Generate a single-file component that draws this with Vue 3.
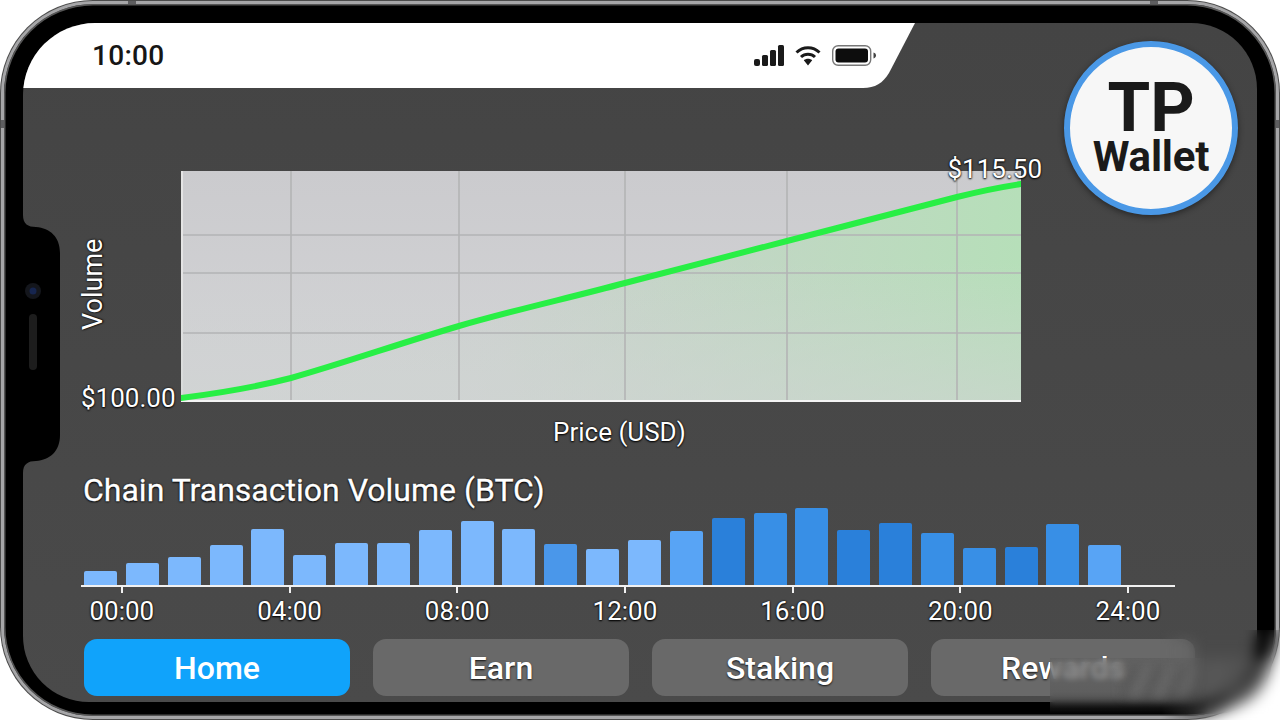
<template>
  <div class="page">
    <div class="phone">
      <div class="screen">
        <div class="status">
          <span class="clock">10:00</span>
          <div class="status-icons">
            <svg width="30" height="21" viewBox="0 0 30 21">
              <rect x="0" y="14" width="6" height="7" rx="2" fill="#1a1a1a" />
              <rect x="8" y="10" width="6" height="11" rx="1.5" fill="#1a1a1a" />
              <rect x="16" y="5" width="6" height="16" rx="1.5" fill="#1a1a1a" />
              <rect x="24" y="0" width="6" height="21" rx="1.5" fill="#1a1a1a" />
            </svg>
            <svg width="26" height="21" viewBox="0 0 26 21">
              <path d="M1.5 7.5C8 1.2 18 1.2 24.5 7.5" fill="none" stroke="#1a1a1a" stroke-width="3" />
              <path d="M6 12C10 8.3 16 8.3 20 12" fill="none" stroke="#1a1a1a" stroke-width="3" />
              <path d="M8.8 15.2 13 20.5l4.2-5.3c-2.4-2-6-2-8.4 0z" fill="#1a1a1a" />
            </svg>
            <svg width="45" height="21" viewBox="0 0 45 21">
              <rect x="0.7" y="0.7" width="38" height="19.6" rx="5.5" fill="none" stroke="#777" stroke-width="1.4" />
              <rect x="3.5" y="3.5" width="32.5" height="14" rx="3" fill="#0d0d0d" />
              <path d="M41.5 7.5c1.6.4 2.5 1.6 2.5 3s-.9 2.6-2.5 3z" fill="#444" />
            </svg>
          </div>
        </div>

        <div class="chart-row">
          <div class="y-col">
            <span class="y-title label">Volume</span>
            <span class="y-min label">$100.00</span>
          </div>
          <div class="plot">
            <svg width="840" height="231" viewBox="0 0 840 231">
              <defs>
                <linearGradient id="plotBg" x1="0" y1="0" x2="0" y2="1">
                  <stop offset="0" stop-color="#cbcbce" />
                  <stop offset="1" stop-color="#d3d4d6" />
                </linearGradient>
                <linearGradient id="areaFill" x1="0" y1="0" x2="1" y2="0">
                  <stop offset="0" stop-color="#b9d8ba" stop-opacity="0" />
                  <stop offset="0.35" stop-color="#b9d8ba" stop-opacity="0.12" />
                  <stop offset="0.6" stop-color="#b9dcbb" stop-opacity="0.5" />
                  <stop offset="1" stop-color="#b6dfb9" />
                </linearGradient>
                <linearGradient id="areaFade" x1="0" y1="0" x2="0" y2="1">
                  <stop offset="0.4" stop-color="#cfd3d2" stop-opacity="0" />
                  <stop offset="1" stop-color="#cfd3d2" stop-opacity="0.6" />
                </linearGradient>
              </defs>
              <rect width="840" height="231" fill="url(#plotBg)" />
              <rect width="2" height="231" fill="#e4e4e4" />
              <path d="M0 227C40 222 75 216 110 207C160 193 220 172 278 155C333 139 388 127 444 112C498 98 552 84 606 70C663 55 720 41 776 26C800 20 820 16 840 13V229H0Z" fill="url(#areaFill)" />
              <rect width="840" height="229" fill="url(#areaFade)" />
              <g stroke="#b3b4b5" stroke-width="1.6">
                <path d="M110 0V229M278 0V229M444 0V229M606 0V229M776 0V229" />
                <path d="M2 64H840M2 102H840M2 162H840" />
              </g>
              <rect y="229" width="840" height="2" fill="#f4f4f4" />
              <path d="M0 227C40 222 75 216 110 207C160 193 220 172 278 155C333 139 388 127 444 112C498 98 552 84 606 70C663 55 720 41 776 26C800 20 820 16 840 13" fill="none" stroke="#28ef45" stroke-width="6" stroke-linecap="round" />
            </svg>
            <span class="y-max label">$115.50</span>
          </div>
        </div>
        <div class="x-title label">Price (USD)</div>

        <div class="volume">
          <h2 class="volume-title label">Chain Transaction Volume (BTC)</h2>
          <div class="bars">
            <div v-for="(bar, i) in bars" :key="i" class="bar" :class="bar.tone" :style="{ height: bar.h + 'px' }"></div>
          </div>
          <div class="axis"></div>
          <div class="ticks">
            <div v-for="t in hours" :key="t" class="tick label"><i></i>{{ t }}</div>
          </div>
        </div>

        <nav class="tabs">
          <button v-for="(tab, i) in tabs" :key="tab" class="tab" :class="{ active: i === 0 }">{{ tab }}</button>
        </nav>

        <svg class="notch" width="37" height="258" viewBox="0 0 37 258">
          <path d="M0 0C0 9 5 12 13 12C27 13 37 22 37 38V220C37 236 27 245 13 246C5 246 0 249 0 258Z" fill="#000" />
          <circle cx="10" cy="76" r="8" fill="#14161c" />
          <circle cx="10" cy="76" r="3.5" fill="#16254f" />
          <rect x="6" y="99" width="8" height="56" rx="4" fill="#1d1d1d" />
        </svg>

        <div class="logo">
          <span class="logo-tp">TP</span>
          <span class="logo-wallet">Wallet</span>
        </div>
      </div>
      <i class="band b1"></i>
      <i class="band b2"></i>
      <i class="band b3"></i>
      <i class="band b4"></i>
    </div>
    <div class="smudge"><i></i></div>
    <div class="smudge-corner"></div>
  </div>
</template>

<script setup>
const heights = [14, 22, 28, 40, 56, 30, 42, 42, 55, 64, 56, 41, 36, 45, 54, 67, 72, 77, 55, 62, 52, 37, 38, 61, 40]
const tones = ['l', 'l', 'l', 'l', 'l', 'l', 'l', 'l', 'l', 'l', 'l', 'm', 'l', 'l', 'n', 'd', 'e', 'e', 'd', 'd', 'e', 'e', 'd', 'e', 'n']
const bars = heights.map((h, i) => ({ h, tone: tones[i] }))
const hours = ['00:00', '04:00', '08:00', '12:00', '16:00', '20:00', '24:00']
const tabs = ['Home', 'Earn', 'Staking', 'Rewards']
</script>

<style>
html,
body {
  margin: 0;
  background: #fff;
}
</style>

<style scoped>
.page {
  position: relative;
  width: 1280px;
  height: 720px;
  overflow: hidden;
  background: #fff;
  font-family: Roboto, "Liberation Sans", sans-serif;
}

.phone {
  position: relative;
  box-sizing: border-box;
  width: 1278px;
  height: 718px;
  margin: 1px;
  padding: 19px 19px 14px 19px;
  background: #000;
  border: 3px solid #a6a6a8;
  border-radius: 92px;
  box-shadow: 0 0 0 1px #4c4c4c, inset 0 0 0 1.5px #555;
}

.screen {
  position: relative;
  width: 1234px;
  height: 679px;
  overflow: hidden;
  background: linear-gradient(#444, #4a4a4a);
  border-radius: 72px 66px 66px 66px;
}

.status {
  display: flex;
  justify-content: space-between;
  align-items: center;
  box-sizing: border-box;
  width: 892px;
  height: 65px;
  padding: 0 38px 0 69px;
  background: #fff;
  clip-path: path("M0 0H892L866 50C860 60 852 65 840 65H0Z");
}

.clock {
  font-size: 28px;
  font-weight: 500;
  letter-spacing: 0.3px;
  color: #161616;
}

.status-icons {
  display: flex;
  align-items: center;
  gap: 11px;
}

.status-icons svg {
  display: block;
}

.label {
  color: #fff;
  text-shadow: 0 1px 2px #000, 0 0 2px #000;
}

.chart-row {
  display: flex;
  margin: 83px 0 0 58px;
}

.y-col {
  display: flex;
  flex-direction: column;
  align-items: flex-start;
  width: 100px;
  height: 231px;
  padding-top: 68px;
  box-sizing: border-box;
}

.y-title {
  height: 91px;
  font-size: 27px;
  line-height: 24px;
  writing-mode: vertical-rl;
  transform: rotate(180deg);
  text-align: right;
}

.y-min {
  margin-top: auto;
  margin-bottom: -11px;
  font-size: 26px;
  line-height: 30px;
}

.plot {
  position: relative;
  width: 840px;
  height: 231px;
}

.plot svg {
  display: block;
}

.y-max {
  position: absolute;
  top: -17px;
  right: -21px;
  font-size: 26px;
  line-height: 30px;
}

.x-title {
  margin: 15px 0 0 530px;
  font-size: 26px;
  line-height: 30px;
}

.volume {
  margin: 24px 0 0 58px;
}

.volume-title {
  height: 38px;
  margin: 0 0 0 2px;
  font-size: 32px;
  font-weight: 400;
  line-height: 38px;
  -webkit-text-stroke: 0.3px #fff;
}

.bars {
  display: flex;
  align-items: flex-end;
  gap: 8.85px;
  height: 76px;
  margin-left: 3px;
}

.bar {
  width: 33px;
  border-radius: 2px 2px 0 0;
}

.l {
  background: #7cb8fd;
}

.m {
  background: #4a97ea;
}

.n {
  background: #58a4f5;
}

.d {
  background: #2a80da;
}

.e {
  background: #388fe6;
}

.axis {
  width: 1094px;
  height: 2px;
  background: #f1f1f1;
}

.ticks {
  display: grid;
  grid-template-columns: repeat(7, 167.7px);
  margin-left: -43px;
}

.tick {
  display: flex;
  flex-direction: column;
  align-items: center;
  font-size: 26px;
  line-height: 30px;
}

.tick i {
  display: block;
  width: 2px;
  height: 6px;
  margin-bottom: 3px;
  background: #f1f1f1;
}

.tabs {
  display: grid;
  grid-template-columns: 266px 256px 256px 264px;
  gap: 23px;
  margin: 13px 0 0 61px;
}

.tab {
  height: 57px;
  padding: 0;
  border: 0;
  border-radius: 13px;
  background: #696969;
  color: #fff;
  font-family: inherit;
  font-size: 32px;
  font-weight: 500;
  text-shadow: 0 1px 2px #111;
}

.tab.active {
  background: #10a3fb;
  text-shadow: none;
}

.notch {
  position: absolute;
  left: 0;
  top: 192px;
}

.logo {
  position: absolute;
  top: 18px;
  left: 1041px;
  display: flex;
  flex-direction: column;
  align-items: center;
  box-sizing: border-box;
  width: 174px;
  height: 174px;
  padding-top: 32px;
  border: 6px solid #4a98e6;
  border-radius: 50%;
  background: #f7f7f7;
  box-shadow: 0 2px 6px rgba(0, 0, 0, 0.45);
  color: #1a1a1a;
  font-weight: 700;
}

.logo-tp {
  font-size: 69px;
  line-height: 58px;
}

.logo-wallet {
  margin-top: -3px;
  font-size: 42px;
  line-height: 46px;
  letter-spacing: -0.2px;
}

.band {
  position: absolute;
  background: #5e5e60;
}

.b1 {
  top: -3px;
  left: 124px;
  width: 8px;
  height: 3px;
}

.b2 {
  top: -3px;
  left: 1146px;
  width: 8px;
  height: 3px;
}

.b3 {
  top: 116px;
  left: -3px;
  width: 3px;
  height: 8px;
}

.b4 {
  top: 116px;
  right: -3px;
  width: 3px;
  height: 8px;
}

/* blurred patch in the lower right corner */
.smudge {
  position: absolute;
  left: 1050px;
  top: 658px;
  width: 222px;
  height: 56px;
  overflow: hidden;
  border-radius: 0 0 80px 0;
  backdrop-filter: blur(3px);
  background: linear-gradient(rgba(92, 92, 92, 0.62), rgba(88, 88, 88, 0.55) 70%, rgba(60, 60, 60, 0) 100%);
}

.smudge i {
  position: absolute;
  left: 70px;
  top: 8px;
  width: 120px;
  height: 32px;
  background: repeating-linear-gradient(115deg, rgba(130, 130, 130, 0.35) 0 7px, rgba(70, 70, 70, 0.2) 7px 22px);
  filter: blur(5px);
}

.smudge-corner {
  position: absolute;
  right: 0;
  bottom: 0;
  width: 120px;
  height: 90px;
  backdrop-filter: blur(7px);
  -webkit-mask-image: linear-gradient(to right, transparent, #000 40%);
  mask-image: linear-gradient(to right, transparent, #000 40%);
}
</style>
